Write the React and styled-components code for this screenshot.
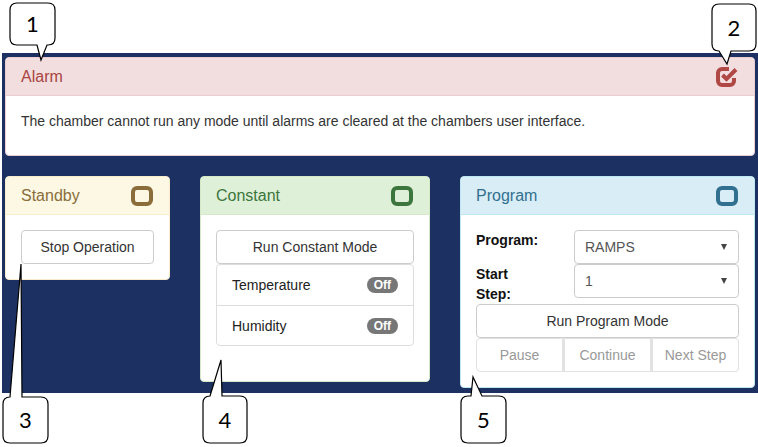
import React from "react";
import styled, { createGlobalStyle } from "styled-components";

const GlobalStyle = createGlobalStyle`
  html, body {
    margin: 0;
    padding: 0;
    background: #fff;
  }
  body {
    font-family: "Liberation Sans", Arial, sans-serif;
    font-size: 14px;
    line-height: 20px;
    color: #333;
  }
  * {
    box-sizing: border-box;
  }
`;

const tones = {
  danger: { bg: "#f2dede", text: "#a94442", border: "#ebccd1", icon: "#b04846" },
  warning: { bg: "#fcf8e3", text: "#8a6d3b", border: "#faebcc", icon: "#8a6d3b" },
  success: { bg: "#dff0d8", text: "#3c763d", border: "#d6e9c6", icon: "#3c763d" },
  info: { bg: "#d9edf7", text: "#31708f", border: "#bce8f1", icon: "#31708f" }
};

const Page = styled.div`
  position: relative;
  width: 758px;
  height: 447px;
  padding-top: 53px;
`;

const Band = styled.div`
  margin-left: 2px;
  background: #1c3162;
  padding: 4px 3px 5px 3px;
`;

const Panel = styled.div`
  width: ${props => props.width || "auto"};
  background: #fff;
  border: 1px solid ${props => tones[props.tone].border};
  border-radius: 4px;
  overflow: hidden;
`;

const PanelHeading = styled.div`
  height: 38px;
  padding: 0 15px;
  display: flex;
  align-items: center;
  justify-content: space-between;
  font-size: 16px;
  background: ${props => tones[props.tone].bg};
  color: ${props => tones[props.tone].text};
  border-bottom: 1px solid ${props => tones[props.tone].border};
`;

const PanelBody = styled.div`
  padding: 15px;
  p {
    margin: 0 0 9px;
  }
`;

const Row = styled.div`
  display: flex;
  align-items: flex-start;
  gap: 30px;
  margin-top: 20px;
`;

const Button = styled.div`
  height: 34px;
  border: 1px solid #ccc;
  border-radius: 4px;
  background: #fff;
  color: #333;
  display: flex;
  align-items: center;
  justify-content: center;
`;

const ListGroup = styled.div`
  margin-bottom: 20px;
  border: 1px solid #ddd;
  border-radius: 4px;
`;

const ListItem = styled.div`
  height: 40px;
  padding: 0 15px;
  display: flex;
  align-items: center;
  justify-content: space-between;
  color: #222;
  & + & {
    border-top: 1px solid #ddd;
  }
`;

const Badge = styled.span`
  display: inline-block;
  height: 16px;
  padding: 0 7px;
  border-radius: 8px;
  background: #777;
  color: #fff;
  font-size: 12px;
  font-weight: bold;
  line-height: 16px;
`;

const FormRow = styled.div`
  display: grid;
  grid-template-columns: 98px 1fr;
  align-items: start;
  min-height: ${props => props.tall ? "40px" : "34px"};
`;

const Label = styled.div`
  width: 60px;
  font-weight: bold;
  color: #111;
  line-height: 20px;
`;

const Select = styled.div`
  height: 34px;
  border: 1px solid #ccc;
  border-radius: 4px;
  padding: 0 10px;
  display: flex;
  align-items: center;
  justify-content: space-between;
  color: #555;
  background: #fff;
`;

const Caret = styled.span`
  width: 0;
  height: 0;
  margin-right: 1px;
  border-left: 3.5px solid transparent;
  border-right: 3.5px solid transparent;
  border-top: 6px solid #444;
`;

const BtnGroup = styled.div`
  display: flex;
`;

const GroupBtn = styled.div`
  flex: 1;
  height: 34px;
  display: flex;
  align-items: center;
  justify-content: center;
  border: 1px solid #e2e2e2;
  color: #999;
  background: #fff;
  & + & {
    border-left: 2px solid #e2e2e2;
  }
  &:first-child {
    border-radius: 4px 0 0 4px;
  }
  &:last-child {
    border-radius: 0 4px 4px 0;
  }
`;

const CalloutBox = styled.div`
  position: absolute;
  display: flex;
  align-items: center;
  justify-content: center;
  font-family: "Lato", "Open Sans", sans-serif;
  font-size: 22px;
  color: #000;
  svg {
    position: absolute;
    left: 0;
    top: 0;
    overflow: visible;
  }
  span {
    position: relative;
  }
`;

const SquareIcon = ({ color }) => (
  <svg width="24" height="22" viewBox="0 0 24 22">
    <rect x="3" y="3" width="18" height="16" rx="4" fill="none" stroke={color} strokeWidth="4" />
  </svg>
);

const CheckSquareIcon = ({ color }) => (
  <svg width="24" height="22" viewBox="0 0 24 22">
    <path
      d="M14 3 H7 a4 4 0 0 0 -4 4 V15 a4 4 0 0 0 4 4 H15 a4 4 0 0 0 4 -4 V12"
      fill="none"
      stroke={color}
      strokeWidth="4"
    />
    <path d="M7.5 9 L11.5 13 L21 3.5" fill="none" stroke={color} strokeWidth="4" />
  </svg>
);

const calloutPath = (w, h, r, side, b1, b2, ax, ay) => {
  if (side === "top") {
    return `M${r} 0 H${b1} L${ax} ${ay} L${b2} 0 H${w - r} Q${w} 0 ${w} ${r} V${h - r} Q${w} ${h} ${w - r} ${h} H${r} Q0 ${h} 0 ${h - r} V${r} Q0 0 ${r} 0 Z`;
  }
  return `M${r} 0 H${w - r} Q${w} 0 ${w} ${r} V${h - r} Q${w} ${h} ${w - r} ${h} H${b2} L${ax} ${ay} L${b1} ${h} H${r} Q0 ${h} 0 ${h - r} V${r} Q0 0 ${r} 0 Z`;
};

// pointer points are given in page coordinates
const Callout = ({ n, x, y, w, h, side, b1, b2, ax, ay }) => (
  <CalloutBox style={{ left: x, top: y, width: w, height: h }}>
    <svg width={w} height={h}>
      <path
        d={calloutPath(w, h, 7, side, b1 - x, b2 - x, ax - x, ay - y)}
        fill="#fff"
        stroke="#000"
        strokeWidth="1.2"
      />
    </svg>
    <span>{n}</span>
  </CalloutBox>
);

const App = () => {
  return (
    <Page>
      <GlobalStyle />
      <Band>
        <Panel tone="danger">
          <PanelHeading tone="danger">
            Alarm
            <CheckSquareIcon color={tones.danger.icon} />
          </PanelHeading>
          <PanelBody>
            <p>The chamber cannot run any mode until alarms are cleared at the chambers user interface.</p>
          </PanelBody>
        </Panel>
        <Row>
          <Panel tone="warning" width="165px">
            <PanelHeading tone="warning">
              Standby
              <SquareIcon color={tones.warning.icon} />
            </PanelHeading>
            <PanelBody>
              <Button>Stop Operation</Button>
            </PanelBody>
          </Panel>
          <Panel tone="success" width="230px">
            <PanelHeading tone="success">
              Constant
              <SquareIcon color={tones.success.icon} />
            </PanelHeading>
            <PanelBody>
              <Button>Run Constant Mode</Button>
              <ListGroup>
                <ListItem>
                  Temperature <Badge>Off</Badge>
                </ListItem>
                <ListItem>
                  Humidity <Badge>Off</Badge>
                </ListItem>
              </ListGroup>
            </PanelBody>
          </Panel>
          <Panel tone="info" width="295px">
            <PanelHeading tone="info">
              Program
              <SquareIcon color={tones.info.icon} />
            </PanelHeading>
            <PanelBody>
              <FormRow>
                <Label>Program:</Label>
                <Select>
                  RAMPS <Caret />
                </Select>
              </FormRow>
              <FormRow tall>
                <Label>Start Step:</Label>
                <Select>
                  1 <Caret />
                </Select>
              </FormRow>
              <Button>Run Program Mode</Button>
              <BtnGroup>
                <GroupBtn>Pause</GroupBtn>
                <GroupBtn>Continue</GroupBtn>
                <GroupBtn>Next Step</GroupBtn>
              </BtnGroup>
            </PanelBody>
          </Panel>
        </Row>
      </Band>
      <Callout n="1" x={10} y={3} w={45} h={42} side="bottom" b1={37} b2={47} ax={41} ay={60} />
      <Callout n="2" x={712} y={4} w={44} h={47} side="bottom" b1={719} b2={731} ax={727} ay={64} />
      <Callout n="3" x={3} y={397} w={45} h={46} side="top" b1={10} b2={22} ax={21} ay={264} />
      <Callout n="4" x={203} y={396} w={44} h={47} side="top" b1={210} b2={222} ax={221} ay={360} />
      <Callout n="5" x={461} y={396} w={45} h={47} side="top" b1={471} b2={482} ax={473} ay={377} />
    </Page>
  );
};

export default App;
